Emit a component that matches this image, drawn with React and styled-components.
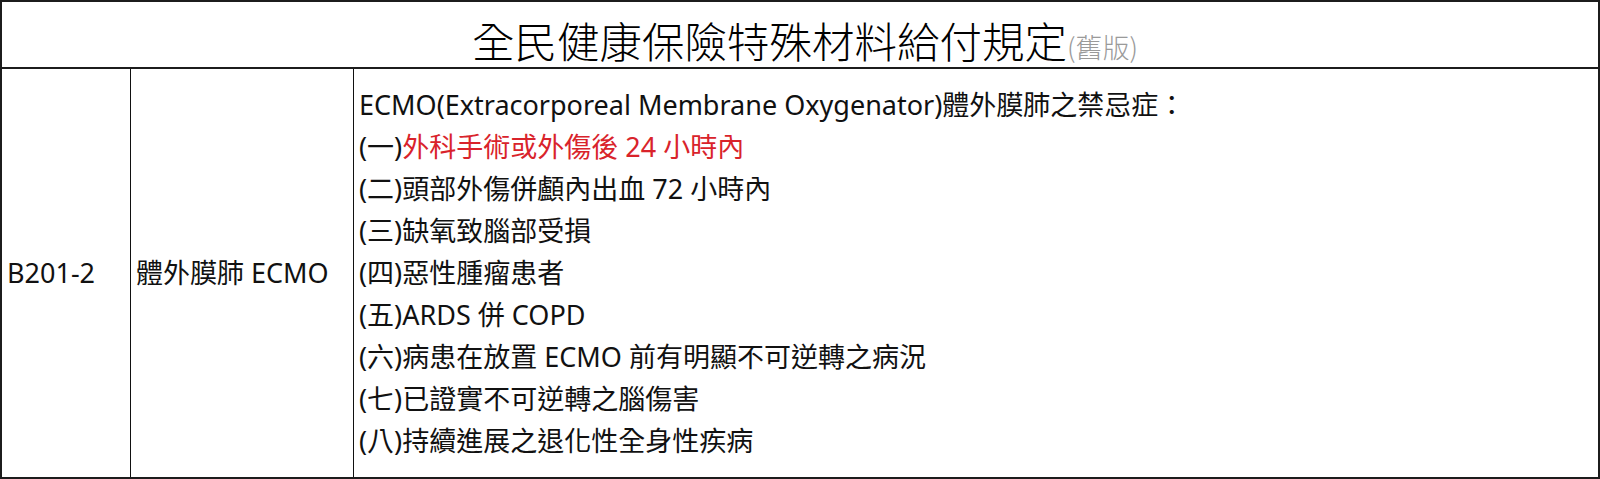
import React from "react";
import styled, { createGlobalStyle } from "styled-components";

const Global = createGlobalStyle`
  html, body { margin: 0; padding: 0; background: #fff; }
  body { font-family: "Noto Sans", "Noto Sans CJK TC", sans-serif; color: #000; }
`;

const Frame = styled.div`
  box-sizing: border-box;
  width: 1600px;
  height: 479px;
  border: 2px solid #1c1c1c;
  display: grid;
  grid-template-rows: 67px 1fr;
  background: #fff;
`;

const TitleBar = styled.div`
  border-bottom: 2px solid #1c1c1c;
  display: flex;
  justify-content: center;
  align-items: flex-end;
  padding-left: 10px;
`;

const Title = styled.h1`
  margin: 0;
  font-family: "Noto Sans CJK TC", sans-serif;
  font-weight: 300;
  font-size: 42.5px;
  line-height: 40px;
  color: #000;
`;

const Note = styled.span`
  font-size: 27px;
  color: #9a9a9a;
  font-weight: 300;
`;

const Row = styled.div`
  display: grid;
  grid-template-columns: 128px 223px 1fr;
  font-family: "Noto Sans", "Noto Sans CJK TC", sans-serif;
  font-size: 27px;
  line-height: 42px;
`;

const Cell = styled.div`
  display: flex;
  flex-direction: column;
  justify-content: center;
  padding: 0 5px;
  border-left: ${(p) => (p.$first ? "none" : "1px solid #111")};
  white-space: nowrap;
`;

const Line = styled.div`
  color: #111;
`;

const Red = styled.span`
  color: #d9232b;
`;

const items = [
  ["(二)", "頭部外傷併顱內出血 72 小時內"],
  ["(三)", "缺氧致腦部受損"],
  ["(四)", "惡性腫瘤患者"],
  ["(五)", "ARDS 併 COPD"],
  ["(六)", "病患在放置 ECMO 前有明顯不可逆轉之病況"],
  ["(七)", "已證實不可逆轉之腦傷害"],
  ["(八)", "持續進展之退化性全身性疾病"],
];

export default function App() {
  return (
    <>
      <Global />
      <Frame>
        <TitleBar>
          <Title>
            全民健康保險特殊材料給付規定<Note>(舊版)</Note>
          </Title>
        </TitleBar>
        <Row>
          <Cell $first>
            <Line>B201-2</Line>
          </Cell>
          <Cell>
            <Line>體外膜肺 ECMO</Line>
          </Cell>
          <Cell>
            <Line>ECMO(Extracorporeal Membrane Oxygenator)體外膜肺之禁忌症：</Line>
            <Line>
              (一)<Red>外科手術或外傷後 24 小時內</Red>
            </Line>
            {items.map(([n, t]) => (
              <Line key={n}>
                {n}
                {t}
              </Line>
            ))}
          </Cell>
        </Row>
      </Frame>
    </>
  );
}
